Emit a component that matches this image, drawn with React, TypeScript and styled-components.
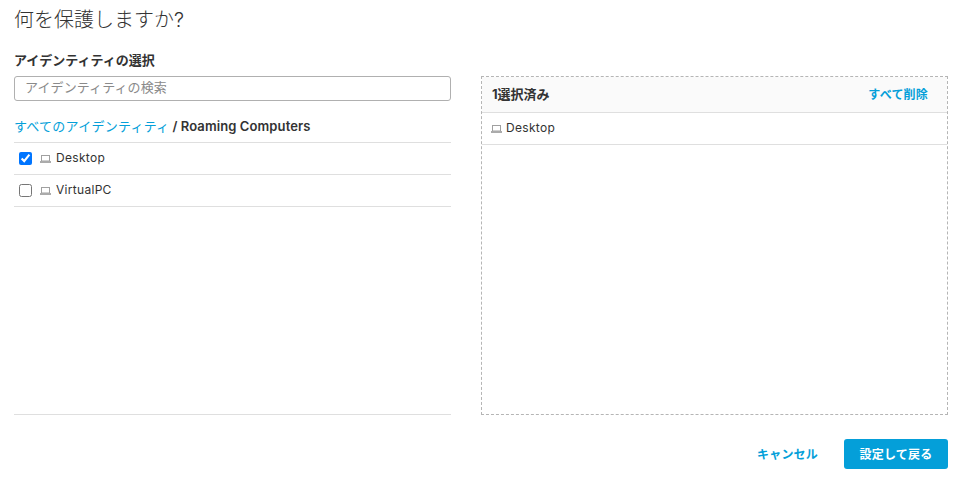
import { createGlobalStyle } from "styled-components";
import styled from "styled-components";

const FONT = `Inter, Roboto, "Noto Sans CJK JP", sans-serif`;

const GlobalStyle = createGlobalStyle`
  html, body {
    margin: 0;
    padding: 0;
    background: #fff;
    font-family: ${FONT};
    color: #333;
  }
`;

function LaptopIcon() {
  return (
    <IconSvg width="11" height="8" viewBox="0 0 11 8">
      <rect x="1.5" y="0.5" width="8" height="5.5" fill="none" stroke="#a0a0a0" strokeWidth="1" />
      <rect x="0" y="6" width="11" height="2" fill="#ababab" />
    </IconSvg>
  );
}

export default function App() {
  return (
    <Page>
      <GlobalStyle />
      <Titulo>何を保護しますか?</Titulo>
      <Columns>
        <LeftColumn>
          <Label>アイデンティティの選択</Label>
          <Search placeholder="アイデンティティの検索" />
          <Breadcrumb>
            <Link>すべてのアイデンティティ</Link>
            <Current>/ Roaming Computers</Current>
          </Breadcrumb>
          <List>
            <Row>
              <Check type="checkbox" defaultChecked />
              <LaptopIcon />
              <Name>Desktop</Name>
            </Row>
            <Row>
              <Check type="checkbox" />
              <LaptopIcon />
              <Name>VirtualPC</Name>
            </Row>
          </List>
        </LeftColumn>
        <SelectedPanel>
          <PanelHeader>
            <PanelTitle>1選択済み</PanelTitle>
            <ClearAll>すべて削除</ClearAll>
          </PanelHeader>
          <SelectedRow>
            <LaptopIcon />
            <Name>Desktop</Name>
          </SelectedRow>
        </SelectedPanel>
      </Columns>
      <Footer>
        <CancelButton>キャンセル</CancelButton>
        <SaveButton>設定して戻る</SaveButton>
      </Footer>
    </Page>
  );
}

const Page = styled.div`
  width: 962px;
  height: 484px;
  box-sizing: border-box;
  padding: 0 14px 0 14px;
  overflow: hidden;
`;

const Titulo = styled.h1`
  margin: 0;
  height: 53px;
  padding-top: 6px;
  box-sizing: border-box;
  font-size: 20px;
  line-height: 28px;
  font-weight: 300;
  color: #333;
`;

const Columns = styled.div`
  display: flex;
  justify-content: space-between;
  height: 362px;
`;

const LeftColumn = styled.div`
  width: 437px;
  height: 362px;
  display: flex;
  flex-direction: column;
  border-bottom: 1px solid #dfdfdf;
  box-sizing: border-box;
`;

const Label = styled.div`
  font-size: 13px;
  line-height: 16px;
  font-weight: 700;
  color: #333;
  margin-top: -1px;
  margin-bottom: 8px;
`;

const Search = styled.input`
  box-sizing: border-box;
  flex: none;
  width: 437px;
  height: 25px;
  padding: 0 10px 3px;
  border: 1px solid #b0b0b0;
  border-radius: 3px;
  outline: none;
  font-family: ${FONT};
  font-size: 13px;
  letter-spacing: 0.1px;
  color: #333;

  &::placeholder {
    color: #8a8a8a;
    opacity: 1;
  }
`;

const Breadcrumb = styled.div`
  display: flex;
  align-items: flex-start;
  gap: 3px;
  flex: none;
  height: 42px;
  padding-top: 16px;
  font-size: 13px;
  line-height: 18px;
  box-sizing: border-box;
  border-bottom: 1px solid #dfdfdf;
`;

const Link = styled.a`
  color: #049fd9;
  letter-spacing: 0.25px;
  cursor: pointer;
`;

const Current = styled.span`
  font-weight: 600;
  letter-spacing: 0.1px;
  color: #333;
`;

const List = styled.div`
  display: flex;
  flex-direction: column;
`;

const Row = styled.div`
  display: flex;
  align-items: center;
  height: 32px;
  box-sizing: border-box;
  border-bottom: 1px solid #dfdfdf;
  padding-left: 5px;
`;

const Check = styled.input`
  width: 13px;
  height: 13px;
  margin: 0 8px 0 0;
`;

const IconSvg = styled.svg`
  flex: none;
`;

const Name = styled.span`
  margin-left: 5px;
  margin-bottom: 2px;
  font-size: 12px;
  letter-spacing: 0.3px;
  color: #333;
`;

const SelectedPanel = styled.div`
  width: 467px;
  height: 339px;
  margin-top: 23px;
  box-sizing: border-box;
  border: 1px dashed #b5b5b5;
`;

const PanelHeader = styled.div`
  display: flex;
  justify-content: space-between;
  align-items: center;
  height: 36px;
  box-sizing: border-box;
  padding: 0 19px 2px 10px;
  background: #fafafa;
  border-bottom: 1px solid #dfdfdf;
`;

const PanelTitle = styled.div`
  font-size: 13px;
  font-weight: 700;
  color: #333;
`;

const ClearAll = styled.a`
  font-size: 12px;
  font-weight: 700;
  letter-spacing: 0.2px;
  color: #049fd9;
  cursor: pointer;
`;

const SelectedRow = styled.div`
  display: flex;
  align-items: center;
  height: 32px;
  box-sizing: border-box;
  padding-left: 9px;
  border-bottom: 1px solid #dfdfdf;

  ${Name} {
    margin-left: 4px;
  }
`;

const Footer = styled.div`
  display: flex;
  justify-content: flex-end;
  align-items: center;
  margin-top: 24px;
  gap: 26px;
`;

const CancelButton = styled.button`
  border: 0;
  background: none;
  padding: 0 0 2px;
  font-family: ${FONT};
  font-size: 12px;
  font-weight: 700;
  letter-spacing: 0.2px;
  color: #049fd9;
`;

const SaveButton = styled.button`
  width: 104px;
  height: 30px;
  border: 0;
  border-radius: 3px;
  padding: 0 0 2px;
  background: #049fd9;
  color: #fff;
  font-family: ${FONT};
  font-size: 12px;
  font-weight: 700;
  letter-spacing: 0.2px;
`;
